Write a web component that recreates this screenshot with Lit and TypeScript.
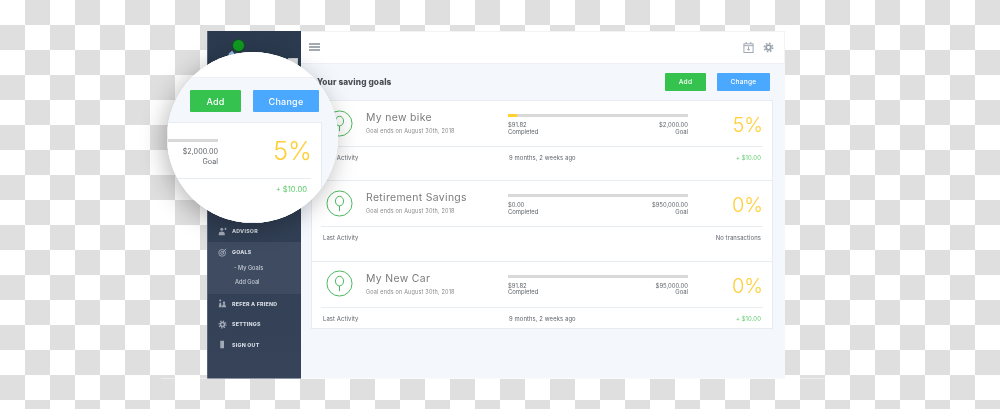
import { LitElement, html, css, svg } from "lit";
import { customElement } from "lit/decorators.js";

interface Goal { name: string; done: string; total: string; pct: string; fill: number; when: string; activity: string; }

const goals: Goal[] = [
  { name: "My new bike", done: "$91.82", total: "$2,000.00", pct: "5%", fill: 5, when: "9 months, 2 weeks ago", activity: "+ $10.00" },
  { name: "Retirement Savings", done: "$0.00", total: "$950,000.00", pct: "0%", fill: 0, when: "", activity: "No transactions" },
  { name: "My New Car", done: "$91.82", total: "$95,000.00", pct: "0%", fill: 0, when: "9 months, 2 weeks ago", activity: "+ $10.00" },
];

const gear = svg`<circle cx="6" cy="6" r="2.6" fill="none" stroke="currentColor" stroke-width="2"/><circle cx="6" cy="6" r="4.6" fill="none" stroke="currentColor" stroke-width="1.6" stroke-dasharray="1.8 1.8"/>`;

@customElement("app-root")
export class AppRoot extends LitElement {
  static styles = css`
    :host {
      display: block; position: relative; height: 409px; overflow: hidden; box-sizing: border-box;
      padding: 31px 0 0 207px;
      background: conic-gradient(#dfdfdf 25%, #fff 0 50%, #dfdfdf 0 75%, #fff 0) 0 0 / 50px 50px;
      font-family: Inter, "Liberation Sans", sans-serif; color: #555;
    }
    .panel { display: flex; width: 578px; height: 348px; filter: blur(0.35px); }
    .side { width: 94px; flex: none; background: linear-gradient(#2b3a4f, #364359); position: relative; padding-top: 190px; box-sizing: border-box; color: #d5dae2; border-left: 1px solid #56637a; }
    .ball { position: absolute; left: 24px; top: 8px; width: 13px; height: 13px; border-radius: 50%; background: #129a22; border: 1px solid #0c4f25; box-sizing: border-box; }
    .row { display: flex; align-items: center; height: 20.5px; padding-left: 10px; gap: 5px; font-size: 5.3px; font-weight: 800; letter-spacing: .22px; }
    .row svg { width: 9px; height: 9px; flex: none; color: #a2aab7; }
    .group { background: #3e4b61; height: 52px; padding-top: .5px; box-sizing: border-box; }
    .sub { font-size: 5.6px; padding-left: 26px; height: 14px; line-height: 14px; font-weight: 500; color: #c4cad4; margin-top: -2px; }
    .sub + .sub { padding-left: 27px; margin-top: 0; }
    .main { flex: 1; background: #f4f7fc; display: flex; flex-direction: column; }
    .top { height: 33px; background: #fff; border-bottom: 1px solid #edf0f5; border-top: 1px solid #f1f3f6; border-right: 1px solid #f1f3f6; display: flex; align-items: center; padding: 0 10px 0 8px; box-sizing: border-box; color: #9aa2ab; }
    .burger { width: 11px; height: 8.5px; border-top: 2px solid #a2a9b1; border-bottom: 2px solid #a2a9b1; position: relative; margin-right: auto; margin-top: -1px; box-sizing: border-box; }
    .burger::after { content: ""; position: absolute; left: 0; right: 0; top: 1.2px; height: 2px; background: #a2a9b1; }
    .top svg { display: block; width: 11px; height: 11px; margin-top: -1px; }
    .top svg + svg { margin-left: 9px; }
    .head { height: 36px; display: flex; align-items: center; padding: 0 15px 0 16px; gap: 11px; }
    .head h1 { margin: 0 auto 0 0; font-size: 8.3px; font-weight: 800; color: #4b4f55; letter-spacing: .1px; }
    .btn { display: flex; align-items: center; justify-content: center; height: 18px; border-radius: 1px; color: #fff; font-size: 6.6px; font-weight: 500; letter-spacing: .25px; }
    .add { width: 41px; background: #35c24f; }
    .chg { width: 53px; background: #4ba8ff; }
    .card { margin: 0 12px 0 10px; height: 229px; background: #fff; border: 1px solid #e6ecf2; box-sizing: border-box; }
    .goal { padding: 0 9px; height: 80.25px; box-sizing: border-box; border-bottom: 1px solid #e8edf1; }
    .goal:last-child { border-bottom: none; height: 67px; }
    .goalmain { display: flex; height: 46px; border-bottom: 1px solid #e8edf1; align-items: flex-start; box-sizing: border-box; }
    .ring { width: 27px; height: 27px; margin: 8.5px 13px 0 5px; flex: none; color: #45b558; display: block; }
    .info { width: 142px; flex: none; padding-top: 10px; }
    .name { font-size: 10.4px; line-height: 13px; color: #7b7b7b; letter-spacing: .35px; }
    .ends { font-size: 5.5px; line-height: 8px; margin-top: 3px; color: #8a8a8a; letter-spacing: .18px; }
    .prog { width: 180px; flex: none; padding-top: 13px; }
    .bar { height: 3px; background: #d9d9d9; }
    .bar div { height: 100%; background: #ffd02f; }
    .lbls { display: flex; justify-content: space-between; font-size: 5.9px; line-height: 6.6px; margin-top: 5px; color: #5f646b; }
    .lbls div:last-child { text-align: right; }
    .pct { margin-left: auto; font-size: 20px; font-weight: 300; color: #ffcf38; line-height: 48px; }
    .act { display: flex; font-size: 5.9px; line-height: 21px; height: 21px; color: #5f646b; padding: 0 2px; letter-spacing: .1px; }
    .act span:first-child { width: 186px; }
    .act span:last-child { margin-left: auto; }
    .pos { color: #5ccb6c; }

    .hair { position: absolute; left: 161px; top: 378px; width: 680px; height: 1px; background: rgba(255,255,255,.45); }
    .lens { position: absolute; left: 167px; top: 52px; width: 171px; height: 171px; border-radius: 50%; box-shadow: -3px 5px 24px rgba(0,0,0,.28); background: #fff; }
    .lensin { width: 100%; height: 100%; border-radius: 50%; overflow: hidden; filter: blur(0.35px); display: flex; flex-direction: column; background: #f4f7fc; }
    .lenstop { height: 25px; flex: none; background: #fff; border-bottom: 1px solid #edf0f5; }
    .lenshead { height: 44px; flex: none; box-sizing: border-box; padding: 12px 19px 0 0; display: flex; justify-content: flex-end; gap: 12px; }
    .lenshead .btn { height: 22px; font-size: 9px; }
    .lenshead .add { width: 51px; }
    .lenshead .chg { width: 66px; }
    .lenscard { flex: 1; background: #fff; margin-right: 16px; border: 1px solid #e6ecf2; box-sizing: border-box; }
    .lmain { height: 56px; margin-right: 10px; border-bottom: 1px solid #e8edf1; display: flex; align-items: flex-start; box-sizing: border-box; }
    .lprog { width: 50px; padding-top: 16px; flex: none; }
    .lbar { height: 3px; background: #d9d9d9; }
    .ltxt { text-align: right; font-size: 7.2px; line-height: 9.6px; margin-top: 5px; color: #5f646b; }
    .lpct { margin-left: auto; font-size: 25.5px; font-weight: 300; color: #ffcf38; line-height: 56px; margin-right: -1px; }
    .lpos { text-align: right; font-size: 7.6px; line-height: 22px; padding-right: 14px; color: #5ccb6c; }
    .tag { position: absolute; left: 288px; top: 58px; width: 10px; height: 8px; background: #dfe2e6; border: 1px solid #c3c7cc; box-sizing: border-box; }
    .tag2 { position: absolute; left: 229px; top: 52px; width: 5px; height: 4px; background: #9fc4ea; transform: rotate(-40deg); }
  `;

  private goal(g: Goal) {
    return html`<div class="goal">
      <div class="goalmain">
        <svg class="ring" viewBox="0 0 28 28" fill="none" stroke="currentColor">
          <circle cx="14" cy="14" r="13" stroke-width="1"/>
          <ellipse cx="14" cy="11.5" rx="4.2" ry="5" stroke-width="1"/>
          <path d="M14 16.5V22" stroke-width="1"/>
        </svg>
        <div class="info"><div class="name">${g.name}</div><div class="ends">Goal ends on August 30th, 2018</div></div>
        <div class="prog">
          <div class="bar"><div style="width:${g.fill}%"></div></div>
          <div class="lbls"><div>${g.done}<br>Completed</div><div>${g.total}<br>Goal</div></div>
        </div>
        <div class="pct">${g.pct}</div>
      </div>
      <div class="act"><span>Last Activity</span><span>${g.when}</span><span class=${g.activity.startsWith("+") ? "pos" : ""}>${g.activity}</span></div>
    </div>`;
  }

  render() {
    return html`
      <div class="panel">
        <aside class="side">
          <div class="ball"></div>
          <div class="row"><svg viewBox="0 0 12 12" fill="currentColor"><circle cx="5" cy="3" r="2"/><path d="M1 11V9c0-2 2-3 4-3s4 1 4 3v2zM9 1h2v3H9z"/></svg>ADVISOR</div>
          <div class="group">
            <div class="row"><svg viewBox="0 0 12 12" fill="none" stroke="currentColor" stroke-width="1.2"><circle cx="5.5" cy="6.5" r="4.5"/><circle cx="5.5" cy="6.5" r="2"/><path d="M6 6l5-5"/></svg>GOALS</div>
            <div class="sub">- My Goals</div>
            <div class="sub">Add Goal</div>
          </div>
          <div class="row"><svg viewBox="0 0 12 12" fill="currentColor"><circle cx="3" cy="2" r="1.4"/><circle cx="8" cy="5" r="1.6"/><path d="M1 11l1-6h2l1 6zM5 11l1.5-4h3L11 11z"/></svg>REFER A FRIEND</div>
          <div class="row"><svg viewBox="0 0 12 12">${gear}</svg>SETTINGS</div>
          <div class="row"><svg viewBox="0 0 12 12" fill="currentColor"><path d="M3 1h5v10H3z"/></svg>SIGN OUT</div>
        </aside>
        <main class="main">
          <div class="top">
            <div class="burger"></div>
            <svg viewBox="0 0 12 12" fill="none" stroke="currentColor"><rect x="1" y="2" width="10" height="9.5" stroke-width="1"/><path d="M3.5 0v2M8.5 0v2M1 4h10" stroke-width="1"/><path d="M6 5v4M4.5 7.5L6 9l1.5-1.5" stroke-width="1"/></svg>
            <svg viewBox="0 0 12 12">${gear}</svg>
          </div>
          <div class="head">
            <h1>Your saving goals</h1>
            <div class="btn add">Add</div>
            <div class="btn chg">Change</div>
          </div>
          <section class="card">${goals.map((g) => this.goal(g))}</section>
        </main>
      </div>
      <div class="hair"></div>
      <div class="tag2"></div>
      <div class="tag"></div>
      <div class="lens">
        <div class="lensin">
          <div class="lenstop"></div>
          <div class="lenshead">
            <div class="btn add">Add</div>
            <div class="btn chg">Change</div>
          </div>
          <div class="lenscard">
            <div class="lmain">
              <div class="lprog"><div class="lbar"></div><div class="ltxt">$2,000.00<br>Goal</div></div>
              <div class="lpct">5%</div>
            </div>
            <div class="lpos">+ $10.00</div>
          </div>
        </div>
      </div>
    `;
  }
}
